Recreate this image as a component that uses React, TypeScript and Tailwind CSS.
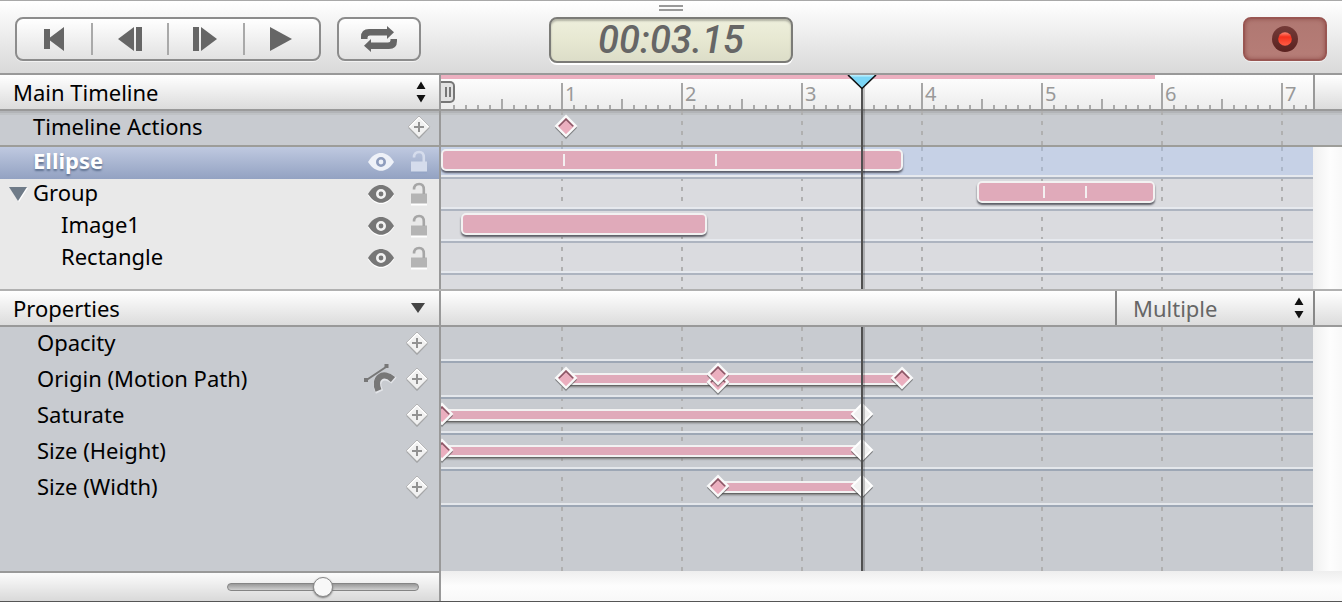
import React, { useState } from "react";

const FRAME_WIDTH = 2;
const TICKS = Array.from({ length: 72 }, (_, i) => i + 1);
const SECONDS = [1, 2, 3, 4, 5, 6, 7];

type Clip = { start: number; end: number; marks: number[] };
type Layer = { name: string; depth: number; selected?: boolean; group?: boolean; clip?: Clip };
type Key = { frame: number; kind: "pink" | "light"; shift?: "up" | "down" };
type Property = { name: string; path?: boolean; span?: [number, number]; keys: Key[] };

const LAYERS: Layer[] = [
  { name: "Ellipse", depth: 0, selected: true, clip: { start: 0, end: 231, marks: [61, 137] } },
  { name: "Group", depth: 0, group: true, clip: { start: 268, end: 357, marks: [301, 322] } },
  { name: "Image1", depth: 1, clip: { start: 10, end: 133, marks: [] } },
  { name: "Rectangle", depth: 1 },
];

const PROPERTIES: Property[] = [
  { name: "Opacity", keys: [] },
  {
    name: "Origin (Motion Path)",
    path: true,
    span: [62, 230],
    keys: [
      { frame: 62, kind: "pink" },
      { frame: 138, kind: "pink", shift: "down" },
      { frame: 138, kind: "pink", shift: "up" },
      { frame: 230, kind: "pink" },
    ],
  },
  { name: "Saturate", span: [0, 210], keys: [{ frame: 0, kind: "pink" }, { frame: 210, kind: "light" }] },
  { name: "Size (Height)", span: [0, 210], keys: [{ frame: 0, kind: "pink" }, { frame: 210, kind: "light" }] },
  { name: "Size (Width)", span: [138, 210], keys: [{ frame: 138, kind: "pink" }, { frame: 210, kind: "light" }] },
];

const headerBar = "bg-linear-to-b from-white to-[#dcdcdc]";

function Stepper({ place }: { place: string }) {
  return (
    <svg className={`pointer-events-none absolute top-1/2 -translate-y-1/2 ${place}`} width="12" height="22" viewBox="0 0 12 22" aria-hidden="true">
      <path d="M6 0.5 L10.5 8 H1.5 Z M1.5 14 H10.5 L6 21.5 Z" fill="#111" />
    </svg>
  );
}

function AddKey({ label }: { label: string }) {
  return (
    <button type="button" aria-label={label} className="flex size-6 items-center justify-center">
      <svg width="24" height="24" viewBox="0 0 24 24">
        <path d="M12 3.5 L22.5 13 L12 24 L1.5 13 Z" fill="#666" opacity="0.5" />
        <path d="M12 1 L22.8 11.8 L12 22.6 L1.2 11.8 Z" fill="#f1f1f1" stroke="#a8a8a8" strokeWidth="0.8" />
        <path d="M12 2.4 L21.4 11.8 M12 2.4 L2.6 11.8" stroke="#fff" strokeWidth="1.2" />
        <path d="M7 12 H17 M12 7 V17" stroke="#929292" strokeWidth="2" />
      </svg>
    </button>
  );
}

function Diamond({ kind, shift, frame }: Key) {
  const top = shift === "up" ? "-top-px" : shift === "down" ? "top-[7px]" : "top-[3px]";
  return (
    <svg
      className={`absolute ${top} -ml-[11px]`}
      style={{ left: frame * FRAME_WIDTH }}
      width="24"
      height="27"
      viewBox="0 0 24 27"
      aria-hidden="true"
    >
      <path d="M12 4 L23 14 L12 25.3 L1 14 Z" fill="#333" opacity="0.35" />
      <path d="M12 3 L23 13 L12 24 L1 13 Z" fill="#333" opacity="0.55" />
      {kind === "pink" ? (
        <>
          <path d="M12 2.2 L21.8 12 L12 21.8 L2.2 12 Z" fill="#ebafbf" stroke="#f9f9f9" strokeWidth="2.4" />
          <path d="M4.9 12.2 L12 5.1 L19.1 12.2" fill="none" stroke="#8a5866" strokeWidth="1.6" />
        </>
      ) : (
        <path d="M12 2 L22 12 L12 22 L2 12 Z" fill="#f1f1f1" stroke="#fff" strokeWidth="2" />
      )}
    </svg>
  );
}

function Eye({ light }: { light?: boolean }) {
  const fill = light ? "#eef1f8" : "#777";
  const ring = light ? "#8f9dbd" : "#f2f2f2";
  return (
    <svg width="28" height="22" viewBox="0 0 28 22" aria-hidden="true">
      {!light && <path d="M1 12.5 C5 6 9.5 3.5 14 3.5 S23 6 27 12.5 C23 18.5 18.5 21 14 21 S5 18.5 1 12.5 Z" fill="#fff" />}
      <path d="M1 11 C5 4.5 9.5 2 14 2 S23 4.5 27 11 C23 17 18.5 19.8 14 19.8 S5 17 1 11 Z" fill={fill} />
      <circle cx="14" cy="11" r="3.7" fill="none" stroke={ring} strokeWidth="2.6" />
    </svg>
  );
}

function Lock({ light }: { light?: boolean }) {
  const color = light ? "#d5dcec" : "#b4b4b4";
  return (
    <svg width="18" height="24" viewBox="0 0 18 24" aria-hidden="true">
      <path d="M1 12 H17 V23.5 H1 Z" fill={light ? "#95a5c6" : "#fff"} />
      <path d="M1 11.5 H17 V21.5 H1 Z" fill={color} />
      <path d="M4 7.5 C4 3.4 6.2 2 9.2 2 S13.8 3.6 13.8 7.5 V12" fill="none" stroke={light ? "#d5dcec" : "#a6a6a6"} strokeWidth="2.6" />
    </svg>
  );
}

function PathIcon() {
  return (
    <svg width="34" height="32" viewBox="0 0 34 32" aria-hidden="true">
      <path d="M16.5 29 C10 16 20 8.5 31 17.5" fill="none" stroke="#e3e5e9" strokeWidth="8" />
      <path d="M15.5 27.5 C10 15 20 7.5 30 16.5" fill="none" stroke="#777" strokeWidth="6.4" />
      <path d="M3.5 17 L23 4" stroke="#777" strokeWidth="2" />
      <path d="M1 15 h4 v4 h-4 Z M21.5 1 h4 v4 h-4 Z" fill="#777" />
    </svg>
  );
}

function GridLines() {
  return (
    <div className="absolute inset-0 flex overflow-hidden" aria-hidden="true">
      {SECONDS.map((s) => (
        <div
          key={s}
          className="ml-[118px] w-0.5 shrink-0 bg-[repeating-linear-gradient(to_bottom,#b0b0b0_0px,#b0b0b0_4px,transparent_4px,transparent_10px)] first:ml-[120px]"
        />
      ))}
    </div>
  );
}

function Playhead({ withCap }: { withCap?: boolean }) {
  return (
    <div className="pointer-events-none absolute inset-y-0 z-10" style={{ left: 210 * FRAME_WIDTH }} aria-hidden="true">
      <div className="h-full w-1 border-r-2 border-l-2 border-r-black/20 border-l-[#505050]" />
      {withCap && (
        <svg className="absolute top-0 -left-[14px]" width="30" height="16" viewBox="0 0 30 16">
          <path d="M1 0 H29 L15 13.8 Z" fill="#7bd6f6" />
          <path d="M3 0.8 H27" stroke="#b6ecfc" strokeWidth="1.6" />
          <path d="M1 0 L15 13.5 L29 0" fill="none" stroke="#111" strokeWidth="1.6" />
        </svg>
      )}
    </div>
  );
}

function ClipBar({ clip }: { clip: Clip }) {
  return (
    <div
      className="absolute top-0.5 h-[22px] rounded-[5px] border-2 border-[#f2f2f2] bg-[#e0aaba] shadow-[0_2px_2px_rgba(50,50,60,0.75)]"
      style={{ left: clip.start * FRAME_WIDTH, width: (clip.end - clip.start) * FRAME_WIDTH }}
    >
      {clip.marks.map((m) => (
        <div key={m} className="absolute top-[3px] -ml-0.5 h-3 w-0.5 bg-[#f4f0f1]" style={{ left: (m - clip.start) * FRAME_WIDTH }} />
      ))}
    </div>
  );
}

function Transport({ label, d, divided }: { label: string; d: string; divided?: boolean }) {
  return (
    <div className="flex items-center">
      {divided && <div className="h-8 w-0.5 bg-[#a9a9a9]" />}
      <button type="button" aria-label={label} className="flex h-10 w-[74px] items-center justify-center">
        <svg width="30" height="24" viewBox="0 0 30 24">
          <path d={d} fill="#666" />
        </svg>
      </button>
    </div>
  );
}

function Toolbar() {
  return (
    <header className="relative grid grid-cols-[1fr_auto_1fr] items-start border-t border-b-2 border-t-[#a8a8a8] border-b-[#999] bg-linear-to-b from-white to-[#d9d9d9] px-[15px] pt-4 pb-[10px]">
      <div className="absolute top-1 left-1/2 h-1.5 w-6 -translate-x-1/2 border-y-2 border-[#999]" />
      <div className="flex gap-4">
        <div className="flex rounded-lg border-2 border-[#8c8c8c] bg-linear-to-b from-white to-[#e2e2e2] shadow-[0_1px_0_#f2f2f2]">
          <Transport label="Go to start" d="M5 2 H11 V10.5 L25 0 V24 L11 13.5 V22 H5 Z" />
          <Transport divided label="Previous frame" d="M3 12 L19 0 V24 Z M21 0 H27 V24 H21 Z" />
          <Transport divided label="Next frame" d="M2 0 H8 V24 H2 Z M10 0 L26 12 L10 24 Z" />
          <Transport divided label="Play" d="M3 0 L25 12 L3 24 Z" />
        </div>
        <button
          type="button"
          aria-label="Loop"
          className="flex h-11 w-[84px] items-center justify-center rounded-lg border-2 border-[#8c8c8c] bg-linear-to-b from-white to-[#e2e2e2] shadow-[0_1px_0_#f2f2f2]"
        >
          <svg width="36" height="28" viewBox="0 0 36 28">
            <path d="M0 14 V12 Q0 4 8 4 H26 V1 L33 7.3 L26 14 V10.5 H9 Q6.5 10.5 6.5 12.5 V14 Z" fill="#666" />
            <path d="M36 14 V16 Q36 24 28 24 H10 V27 L3 20.7 L10 14 V17.5 H27 Q29.5 17.5 29.5 15.5 V14 Z" fill="#666" />
          </svg>
        </button>
      </div>
      <output
        aria-label="Current time"
        className="flex h-[46px] w-[244px] items-center justify-center rounded-lg border-2 border-[#7b7b77] bg-linear-to-b from-[#eeefdc] via-[#e7e8d2] via-50% to-[#dcddc8] font-['Roboto',sans-serif] text-[38px] leading-none font-medium text-[#666] italic shadow-[0_2px_0_#fff,inset_0_2px_2px_rgba(0,0,0,0.25)]"
      >
        00:03.15
      </output>
      <button
        type="button"
        aria-label="Record"
        className="flex h-11 w-[84px] items-center justify-center justify-self-end rounded-lg border-2 border-[#995652] bg-linear-to-b from-[#b07872] to-[#b67d77] shadow-[inset_0_0_4px_#8f4f4b,0_1px_0_#f2f2f2]"
      >
        <svg width="26" height="26" viewBox="0 0 26 26">
          <defs>
            <linearGradient id="recordRing" x2="0" y2="1">
              <stop offset="0" stopColor="#743b38" />
              <stop offset="1" stopColor="#5a211f" />
            </linearGradient>
            <linearGradient id="recordDot" x2="0" y2="1">
              <stop offset="0" stopColor="#ff8a76" />
              <stop offset="0.35" stopColor="#f5301c" />
              <stop offset="1" stopColor="#ff5d46" />
            </linearGradient>
          </defs>
          <circle cx="13" cy="13" r="13" fill="url(#recordRing)" />
          <circle cx="13" cy="13" r="6.8" fill="url(#recordDot)" />
        </svg>
      </button>
    </header>
  );
}

function Ruler() {
  return (
    <div className="flex h-9 border-b-2 border-[#999]">
      <div className="relative flex-1 overflow-hidden bg-linear-to-b from-white to-[#ececec]">
        <div className="absolute top-0 left-0 h-1 bg-[#ecb0c0]" style={{ width: 357 * FRAME_WIDTH }} />
        {TICKS.map((t) => (
          <div
            key={t}
            className={`absolute bottom-0 w-0.5 ${t % 10 === 0 ? "h-[26px] bg-[#a6a6a6]" : t % 5 === 0 ? "h-2.5 bg-[#aaa]" : "h-1 bg-[#aaa]"}`}
            style={{ left: t * 6 * FRAME_WIDTH }}
          />
        ))}
        {SECONDS.map((s) => (
          <span key={s} className="absolute top-[7px] ml-1 text-[20px] leading-6 text-[#999]" style={{ left: s * 60 * FRAME_WIDTH }}>
            {s}
          </span>
        ))}
        <button
          type="button"
          aria-label="Timeline start"
          className="absolute top-1.5 left-0 flex h-[22px] w-[14px] items-center justify-center gap-0.5 rounded-r-[5px] border-2 border-l-0 border-[#777] bg-[#e2e2e2] pl-0.5"
        >
          <span className="h-2.5 w-0.5 bg-[#777]" />
          <span className="h-2.5 w-0.5 bg-[#777]" />
        </button>
      </div>
      <div className={`w-[29px] border-l-2 border-[#999] ${headerBar}`} />
    </div>
  );
}

function Gutter() {
  return <div className="w-[29px] bg-linear-to-r from-[#f0f0f0] via-[#fdfdfd] via-60% to-[#f8f8f8]" />;
}

export default function App() {
  const [zoom, setZoom] = useState(50);
  const insetTop = "shadow-[inset_0_2px_0_#b2b4b7,inset_0_4px_0_#bfc2c5]";

  return (
    <div className="flex min-h-screen flex-col border-b border-[#555] bg-[#fafafa] font-['Noto_Sans',sans-serif] text-[22px] leading-7 text-black">
      <Toolbar />

      <section className="flex border-b-2 border-[#b0b0b0]" aria-label="Layers">
        <div className="w-[441px] shrink-0 border-r-2 border-[#999] bg-[#e9e9e9]">
          <div className={`relative h-9 border-b-2 border-[#999] ${headerBar}`}>
            <select aria-label="Timeline" className="h-full w-full appearance-none bg-transparent pl-[13px] outline-none">
              <option>Main Timeline</option>
            </select>
            <Stepper place="right-3" />
          </div>
          <div className={`flex h-9 items-center justify-between border-b-2 border-[#9d9d99] bg-[#c8cbd0] pr-2 pb-0.5 pl-[33px] ${insetTop}`}>
            <span className="pb-0.5">Timeline Actions</span>
            <AddKey label="Add timeline action" />
          </div>
          {LAYERS.map((layer) => (
            <div
              key={layer.name}
              className={`flex h-8 items-center pr-[11px] pb-0.5 ${layer.selected ? "bg-linear-to-b from-[#bfc9e0] to-[#93a2c2] font-bold text-white [text-shadow:0_2px_2px_#5f7190]" : ""}`}
            >
              <div className="flex w-[33px] justify-center">
                {layer.group && (
                  <button type="button" aria-label="Collapse group" className="flex pl-0.5">
                    <svg width="20" height="16" viewBox="0 0 20 16">
                      <path d="M2 2 H20 L11 16 Z" fill="#fff" />
                      <path d="M1 1 H19 L10 15 Z" fill="#6f7b88" />
                    </svg>
                  </button>
                )}
              </div>
              <span className={layer.depth ? "flex-1 pb-1 pl-7" : "flex-1 pb-1"}>{layer.name}</span>
              <button type="button" aria-label={`Toggle visibility of ${layer.name}`} className="mr-[15px]">
                <Eye light={layer.selected} />
              </button>
              <button type="button" aria-label={`Lock ${layer.name}`}>
                <Lock light={layer.selected} />
              </button>
            </div>
          ))}
        </div>

        <div className="relative flex min-w-0 flex-1 flex-col">
          <Ruler />
          <div className={`relative h-9 border-b-2 border-[#9d9d99] bg-[#c8cbd0] ${insetTop}`}>
            <GridLines />
            <Diamond frame={62} kind="pink" />
          </div>
          <div className="flex h-[142px]">
            <div className="relative flex-1 overflow-hidden bg-[#dadbdf]">
              <GridLines />
              {LAYERS.map((layer) => (
                <div
                  key={layer.name}
                  className={`relative h-8 border-b-2 border-[#adb4c0] shadow-[inset_0_-2px_0_#e6e9ee] ${layer.selected ? "bg-[#a8c4f0]/40" : ""}`}
                >
                  {layer.clip && <ClipBar clip={layer.clip} />}
                </div>
              ))}
            </div>
            <Gutter />
          </div>
          <Playhead withCap />
        </div>
      </section>

      <section className="flex flex-1" aria-label="Properties">
        <div className="flex w-[441px] shrink-0 flex-col border-r-2 border-[#999] bg-[#c8cbd0]">
          <div className={`flex h-9 items-center justify-between border-b-2 border-[#999] pr-3.5 pl-[13px] ${headerBar}`}>
            Properties
            <button type="button" aria-label="Collapse properties">
              <svg width="14" height="10" viewBox="0 0 14 10">
                <path d="M0 0 H14 L7 10 Z" fill="#444" />
              </svg>
            </button>
          </div>
          <div className="flex-1">
            {PROPERTIES.map((p) => (
              <div key={p.name} className="flex h-9 items-center pr-2.5 pb-1 pl-[37px]">
                <span className="flex-1 pb-0.5">{p.name}</span>
                {p.path && (
                  <button type="button" aria-label="Edit motion path" className="mr-2">
                    <PathIcon />
                  </button>
                )}
                <AddKey label={`Add keyframe for ${p.name}`} />
              </div>
            ))}
          </div>
          <div className="flex h-[30px] items-center justify-end border-t-2 border-[#999] bg-linear-to-b from-[#fcfcfc] to-[#d9d9d9] pr-5">
            <input
              type="range"
              aria-label="Timeline zoom"
              min={0}
              max={100}
              value={zoom}
              onChange={(e) => setZoom(Number(e.target.value))}
              className="h-2 w-48 appearance-none rounded-full border border-[#858585] bg-linear-to-b from-[#999] to-[#d0d0d0] outline-none [&::-webkit-slider-thumb]:size-5 [&::-webkit-slider-thumb]:appearance-none [&::-webkit-slider-thumb]:rounded-full [&::-webkit-slider-thumb]:border [&::-webkit-slider-thumb]:border-[#888] [&::-webkit-slider-thumb]:bg-[#f8f8f8] [&::-webkit-slider-thumb]:shadow-[0_1px_2px_#777]"
            />
          </div>
        </div>

        <div className="flex min-w-0 flex-1 flex-col">
          <div className={`flex h-9 justify-end border-b-2 border-[#999] ${headerBar}`}>
            <div className="relative w-[198px] border-l-2 border-[#888]">
              <select aria-label="Easing" className="h-full w-full appearance-none bg-transparent pl-4 text-[#666] outline-none">
                <option>Multiple</option>
              </select>
              <Stepper place="right-2" />
            </div>
            <div className="w-[29px] border-l-2 border-[#888]" />
          </div>
          <div className="flex flex-1">
            <div className="relative flex-1 overflow-hidden bg-[#c8cbd0]">
              <GridLines />
              {PROPERTIES.map((p) => (
                <div key={p.name} className="relative h-9 border-b-2 border-[#9da7b5] shadow-[inset_0_-2px_0_#e4e7eb]">
                  {p.span && (
                    <div
                      className="absolute top-2.5 h-3 border-y-2 border-[#f2f2f2] bg-[#e0aaba] shadow-[0_1px_0_#666,0_2px_2px_#777]"
                      style={{ left: p.span[0] * FRAME_WIDTH, width: (p.span[1] - p.span[0]) * FRAME_WIDTH }}
                    />
                  )}
                  {p.keys.map((k, i) => (
                    <Diamond key={i} {...k} />
                  ))}
                </div>
              ))}
              <Playhead />
            </div>
            <Gutter />
          </div>
          <div className="h-[30px] bg-linear-to-b from-[#eeeeee] via-[#fdfdfd] via-50% to-[#f8f8f8]" />
        </div>
      </section>
    </div>
  );
}
